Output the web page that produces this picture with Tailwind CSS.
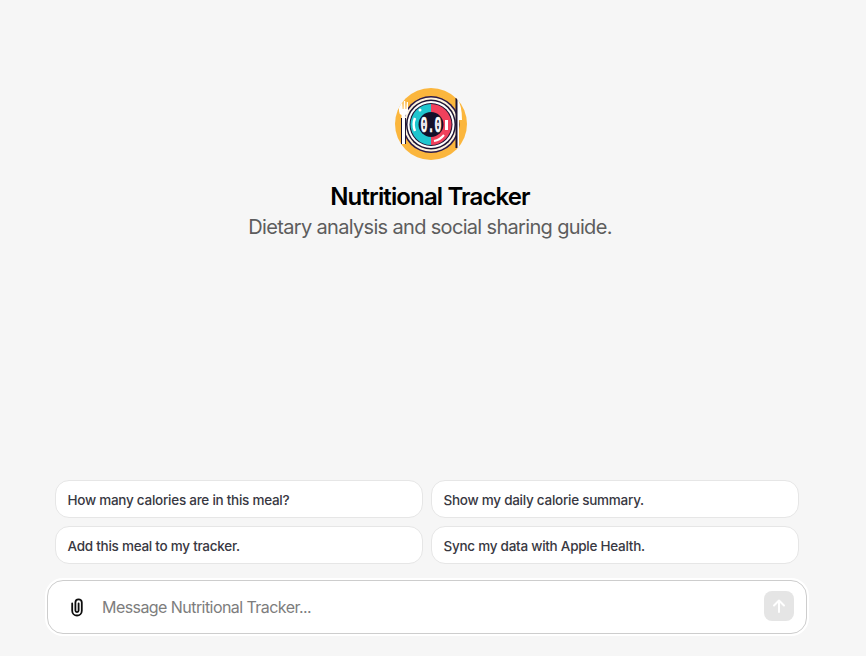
<!DOCTYPE html>
<html lang="en">
<head>
    <meta charset="UTF-8">
    <meta name="viewport" content="width=device-width, initial-scale=1.0">
    <title>Nutritional Tracker</title>
    <script src="https://cdn.jsdelivr.net/npm/@tailwindcss/browser@4"></script>
</head>
<body class="bg-[#f6f6f6] font-['Inter',sans-serif]">
    <div class="flex flex-col h-[656px] w-[866px] overflow-hidden">
        <!-- GPT intro -->
        <main class="flex-1 flex flex-col items-center pt-[88px] w-[862px]">
            <svg class="w-[72px] h-[72px]" viewBox="0 0 72 72">
                <defs><clipPath id="c"><circle cx="36" cy="36" r="36"/></clipPath></defs>
                <g clip-path="url(#c)">
                    <rect width="72" height="72" fill="#fbb63d"/>
                    <!-- plate -->
                    <circle cx="36" cy="36.500" r="28.500" fill="#2a1a4a"/>
                    <circle cx="36" cy="36.500" r="27" fill="#fdf3df"/>
                    <circle cx="36" cy="36.500" r="25" fill="#1d1433"/>
                    <circle cx="36" cy="36.500" r="23.500" fill="#fff"/>
                    <circle cx="36" cy="36.500" r="21.500" fill="#1d1433"/>
                    <path d="M36 16a20.500 20.500 0 0 0 0 41z" fill="#1fc6cf"/>
                    <path d="M36 16a20.500 20.500 0 0 1 0 41z" fill="#f0415c"/>
                    <circle cx="36" cy="36.500" r="12.500" fill="#14102a"/>
                    <path d="M20 30a17 17 0 0 0 0 13" fill="none" stroke="#fff" stroke-width="2.500"/>
                    <circle cx="25" cy="22" r="1.500" fill="#fff"/>
                    <rect x="50" y="32" width="3" height="10" fill="#fff"/>
                    <path d="M39 53a17 17 0 0 0 10-6" fill="none" stroke="#fff" stroke-width="2"/>
                    <text x="36" y="44" text-anchor="middle" font-family="'Liberation Mono',monospace" font-size="22" font-weight="700" fill="#fff" stroke="#fff" stroke-width=".5" textLength="21" lengthAdjust="spacingAndGlyphs">0.0</text>
                    <!-- fork -->
                    <path d="M4 14v9q0 3 2.500 4v29h4V27q2.500-1 2.500-4v-9h-1.200l-.5 7h-.8l-.3-8h-1.400l-.3 8h-.8l-.5-7z" fill="#fff"/>
                    <path d="M6.500 30v26M10.500 30v26" stroke="#1d1433" stroke-width="1"/>
                    <!-- knife -->
                    <path d="M62 10q5 7 5 22h-3v28h-2z" fill="#fff"/>
                    <path d="M61.500 10v50" stroke="#1d1433" stroke-width="2"/>
                </g>
            </svg>
            <h1 class="mt-[21px] mr-[2px] text-[24px] leading-[32px] font-semibold text-black tracking-[-0.87px]">Nutritional Tracker</h1>
            <p class="mr-[2px] text-[20px] leading-[28px] font-normal text-[#5d5d5d] tracking-[-0.67px]">Dietary analysis and social sharing guide.</p>
        </main>

        <!-- Suggestions -->
        <div class="grid grid-cols-2 gap-2 ml-[55px] w-[744px]">
            <button class="h-[38px] pl-[11.5px] pr-3 pt-[2px] text-left bg-white border border-[#e6e6e6] rounded-[14px] text-[13.5px] font-medium text-[#383842] tracking-[-0.26px]">How many calories are in this meal?</button>
            <button class="h-[38px] pl-[11.5px] pr-3 pt-[2px] text-left bg-white border border-[#e6e6e6] rounded-[14px] text-[13.5px] font-medium text-[#383842] tracking-[-0.26px]">Show my daily calorie summary.</button>
            <button class="h-[38px] pl-[11.5px] pr-3 pt-[2px] text-left bg-white border border-[#e6e6e6] rounded-[14px] text-[13.5px] font-medium text-[#383842] tracking-[-0.26px]">Add this meal to my tracker.</button>
            <button class="h-[38px] pl-[11.5px] pr-3 pt-[2px] text-left bg-white border border-[#e6e6e6] rounded-[14px] text-[13.5px] font-medium text-[#383842] tracking-[-0.26px]">Sync my data with Apple Health.</button>
        </div>

        <!-- Message box -->
        <div class="flex items-center mt-4 mb-[22px] ml-[47px] w-[760px] h-[54px] bg-white border border-[#cdcdcd] rounded-2xl shadow-[0_0_0_2px_#ffffff]">
            <svg class="ml-[19px] w-5 h-5 shrink-0" viewBox="0 0 20 20" fill="none" stroke="#0d0d0d" stroke-width="1.800" stroke-linecap="round">
                <path d="M5.200 6.500v7.200a4.800 4.800 0 0 0 9.600 0V5.500a3.200 3.200 0 0 0-6.400 0v8a1.600 1.600 0 0 0 3.200 0V6.500"/>
            </svg>
            <span class="ml-[15px] flex-1 text-[16px] text-[#7d7d7d] tracking-[-0.56px]">Message Nutritional Tracker...</span>
            <button class="mr-3 mb-[2px] w-[30px] h-[30px] flex items-center justify-center rounded-lg bg-[#e5e5e5]">
                <svg class="w-4 h-4" viewBox="0 0 16 16" fill="none" stroke="#fff" stroke-width="2" stroke-linecap="round" stroke-linejoin="round">
                    <path d="M8 14V2.500M3 7.500l5-5 5 5"/>
                </svg>
            </button>
        </div>
    </div>
</body>
</html>
